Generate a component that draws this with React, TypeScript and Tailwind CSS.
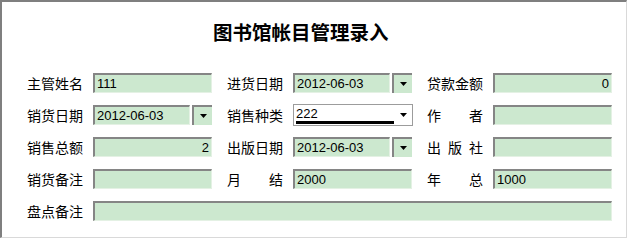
import React from 'react';

const cjk = { fontFamily: '"Noto Sans CJK SC", "Noto Sans", sans-serif' };
const latin = { fontFamily: '"Liberation Sans", Arial, sans-serif' };

// label stretched over a fixed width, chars spread like the original form
const Label = ({ text }: { text: string }) => {
  const chars = text.split('');
  return (
    <div
      className={`flex w-[56px] shrink-0 text-[14px] leading-[20px] text-black ${chars.length < 4 ? 'justify-between' : 'justify-between'}`}
      style={cjk}
    >
      {chars.map((c, i) => (
        <span key={i}>{c}</span>
      ))}
    </div>
  );
};

const Field = ({ value = '', right = false, w = 'w-[119px]' }: { value?: string; right?: boolean; w?: string }) => (
  <div
    className={`${w} h-[20px] shrink-0 bg-[#cce8cf] border-t-2 border-l-2 border-[#858585] border-r border-b border-r-[#e4f1e4] border-b-[#e4f1e4] flex items-center px-[2px] text-[13px] text-black ${right ? 'justify-end' : 'justify-start'}`}
    style={latin}
  >
    {value}
  </div>
);

const DateField = ({ value }: { value: string }) => (
  <div className="flex w-[119px] shrink-0 gap-[2px]">
    <Field value={value} w="w-[97px]" />
    <div className="w-[20px] h-[20px] bg-[#cce8cf] border-t-2 border-l-2 border-[#858585] flex items-center justify-center">
      <svg width="7" height="4" viewBox="0 0 7 4">
        <path d="M0 0h7L3.5 4z" fill="#000" />
      </svg>
    </div>
  </div>
);

const Combo = ({ value }: { value: string }) => (
  <div className="w-[120px] h-[22px] -my-[1px] shrink-0 bg-white border border-[#9c9c9c] flex items-center pl-[2px] pr-[5px]">
    <div className="flex flex-col w-[98px]">
      <span className="text-[13px] leading-[15px] text-black" style={latin}>
        {value}
      </span>
      <div className="h-[3px] w-[98px] bg-black" />
    </div>
    <div className="flex-1 flex justify-end">
      <svg width="7" height="4" viewBox="0 0 7 4">
        <path d="M0 0h7L3.5 4z" fill="#000" />
      </svg>
    </div>
  </div>
);

const Cell = ({ label, children }: { label: string; children: React.ReactNode }) => (
  <div className="flex items-center w-[185px] gap-[10px]">
    <Label text={label} />
    {children}
  </div>
);

export default function App() {
  return (
    <div className="w-[630px] h-[240px] bg-white">
      <div className="w-[627px] h-[238px] border-t-2 border-l-2 border-[#7f7f7f] border-r border-b border-r-[#d9d9d9] border-b-[#d9d9d9] bg-white">
        <div
          className="mt-[20px] ml-[211px] text-[19.5px] leading-[20px] font-bold text-black"
          style={cjk}
        >
          图书馆帐目管理录入
        </div>

        <div className="mt-[31px] ml-[25px] flex flex-col gap-[12px]">
          <div className="flex gap-[15px] h-[20px]">
            <Cell label="主管姓名">
              <Field value="111" />
            </Cell>
            <Cell label="进货日期">
              <DateField value="2012-06-03" />
            </Cell>
            <Cell label="贷款金额">
              <Field value="0" right />
            </Cell>
          </div>

          <div className="flex gap-[15px] h-[20px]">
            <Cell label="销货日期">
              <DateField value="2012-06-03" />
            </Cell>
            <Cell label="销售种类">
              <Combo value="222" />
            </Cell>
            <Cell label="作者">
              <Field />
            </Cell>
          </div>

          <div className="flex gap-[15px] h-[20px]">
            <Cell label="销售总额">
              <Field value="2" right />
            </Cell>
            <Cell label="出版日期">
              <DateField value="2012-06-03" />
            </Cell>
            <Cell label="出版社">
              <Field />
            </Cell>
          </div>

          <div className="flex gap-[15px] h-[20px]">
            <Cell label="销货备注">
              <Field />
            </Cell>
            <Cell label="月结">
              <Field value="2000" />
            </Cell>
            <Cell label="年总">
              <Field value="1000" />
            </Cell>
          </div>

          <div className="flex items-center gap-[10px] h-[20px]">
            <Label text="盘点备注" />
            <Field w="w-[519px]" />
          </div>
        </div>
      </div>
    </div>
  );
}
